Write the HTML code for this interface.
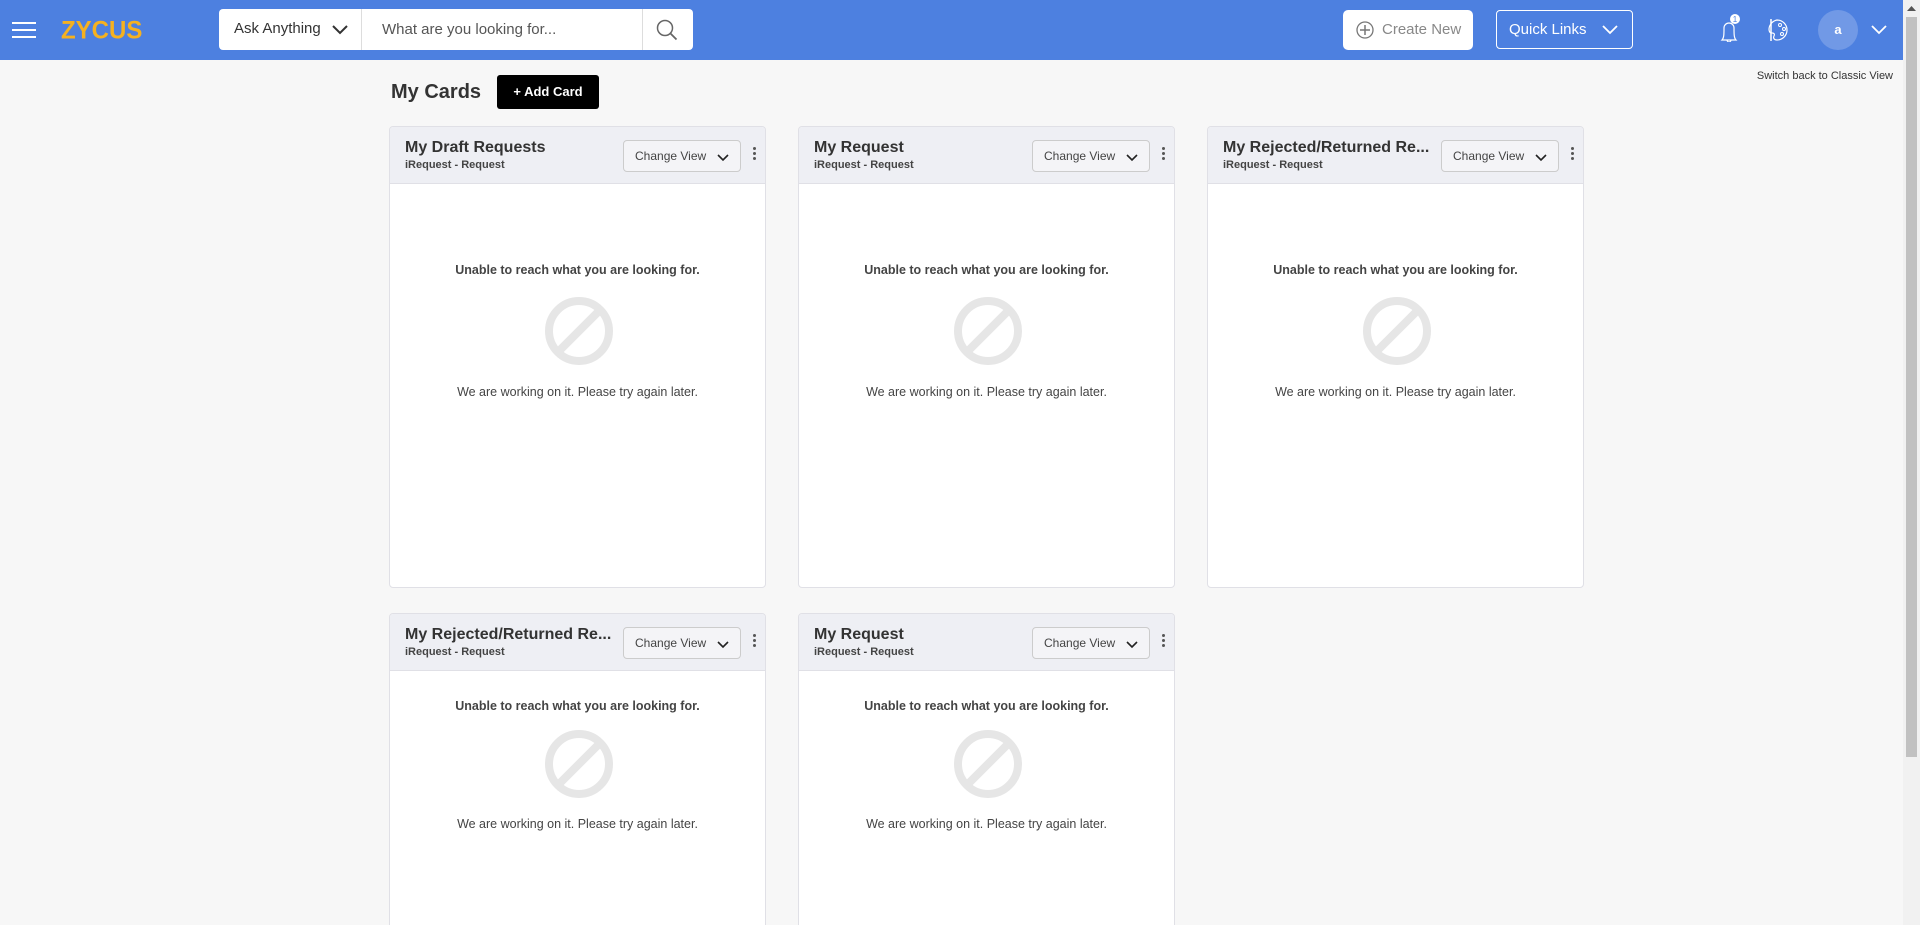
<!DOCTYPE html>
<html><head><meta charset="utf-8"><style>
*{box-sizing:border-box;margin:0;padding:0}
html{width:1920px;height:925px;overflow:hidden}
body{width:1920px;height:925px;overflow:hidden;background:#f7f7f7;font-family:"Liberation Sans",Arial,sans-serif;position:relative;color:#333}
.hdr{position:absolute;left:0;top:0;width:1903px;height:60px;background:#4d80e0}
.abs{position:absolute}
.sb{position:absolute;left:1903px;top:0;width:17px;height:925px;background:#f1f1f1}
.sb .th{position:absolute;left:3px;top:17px;width:11px;height:740px;background:#c1c1c1}
.card{position:absolute;width:377px;background:#fff;border:1px solid #e0e0e6;border-radius:4px;overflow:hidden}
.ch{height:57px;background:#eeeff4;border-bottom:1px solid #e0e0e6;position:relative}
.ct{position:absolute;left:15px;top:12px;font-size:16px;font-weight:bold;color:#333}
.cs{position:absolute;left:15px;top:32px;font-size:11px;font-weight:bold;color:#444}
.cv{position:absolute;left:233px;top:13px;width:118px;height:32px;border:1px solid #ccc;border-radius:4px;background:#f4f4f7;font-size:12px;color:#444;padding:8px 0 0 11px}
.cv svg{position:absolute;right:11px;top:13px}
.km{position:absolute;left:363px;top:20px;width:3px}
.km i{display:block;width:3px;height:3px;background:#555;border-radius:50%;margin-bottom:2px}
.u{position:absolute;left:0;width:100%;text-align:center;font-size:12.5px;font-weight:bold;color:#444;top:136px}
.w{position:absolute;left:0;width:100%;text-align:center;font-size:12.5px;color:#444;top:258px}
.ic{position:absolute;left:154px;top:169px}
</style></head><body>
<div class="hdr">
<div class="abs" style="left:12px;top:22px;width:24px"><div style="height:2px;background:#fff;margin-bottom:5px"></div><div style="height:2px;background:#fff;margin-bottom:5px"></div><div style="height:2px;background:#fff"></div></div>
<div class="abs" style="left:61px;top:17px;font-size:24px;font-weight:900;color:#f5b120;letter-spacing:0px;transform:scaleY(1.05)">ZYCUS</div>
<div class="abs" style="left:219px;top:9px;width:474px;height:41px;background:#fff;border-radius:4px">
<div class="abs" style="left:15px;top:11px;font-size:15px;color:#333">Ask Anything</div>
<svg class="abs" style="left:113px;top:16px" width="16" height="10"><path d="M1 1l7 7 7-7" stroke="#333" stroke-width="2" fill="none"/></svg>
<div class="abs" style="left:142px;top:0;width:1px;height:41px;background:#ddd"></div>
<div class="abs" style="left:163px;top:12px;font-size:15px;color:#555">What are you looking for...</div>
<div class="abs" style="left:423px;top:0;width:1px;height:41px;background:#ddd"></div>
<svg class="abs" style="left:436px;top:9px" width="24" height="24"><circle cx="10" cy="10" r="7.5" stroke="#666" stroke-width="1.5" fill="none"/><path d="M15.5 15.5l6 6" stroke="#666" stroke-width="1.8"/></svg>
</div>
<div class="abs" style="left:1343px;top:10px;width:130px;height:40px;background:#fff;border-radius:5px">
<svg class="abs" style="left:13px;top:11px" width="18" height="18"><circle cx="9" cy="9" r="8" stroke="#777" stroke-width="1.3" fill="none"/><path d="M9 4v10M4 9h10" stroke="#777" stroke-width="1.5"/></svg>
<div class="abs" style="left:39px;top:11px;font-size:15px;color:#888">Create New</div></div>
<div class="abs" style="left:1496px;top:10px;width:137px;height:39px;border:1px solid #fff;border-radius:4px">
<div class="abs" style="left:12px;top:10px;font-size:15px;color:#fff">Quick Links</div>
<svg class="abs" style="left:105px;top:14px" width="16" height="10"><path d="M1 1l7 7 7-7" stroke="#fff" stroke-width="1.8" fill="none"/></svg></div>
<svg class="abs" style="left:1716px;top:14px" width="26" height="28"><path d="M6 26c2-2 2-6 2-12a5 5 0 0 1 10 0c0 6 0 10 2 12z M11 26c0 1 1 2 2 2s2-1 2-2" stroke="#fff" stroke-width="1.2" fill="none"/><circle cx="19" cy="5" r="5" fill="#fff"/><text x="19" y="8" font-size="8" text-anchor="middle" fill="#4d80e0" font-family="Liberation Sans">1</text></svg>
<svg class="abs" style="left:1767px;top:17px" width="24" height="26"><path d="M10 3a10 10 0 1 1 0 20c-3 0-4-2-3-4s0-3-2-3-3-1-3-4a10 10 0 0 1 8-9z" stroke="#fff" stroke-width="1.2" fill="none"/><circle cx="13" cy="8" r="1.5" stroke="#fff" fill="none"/><circle cx="17" cy="12" r="1.5" stroke="#fff" fill="none"/><circle cx="15" cy="17" r="1.5" stroke="#fff" fill="none"/><path d="M4 2v22" stroke="#fff" stroke-width="1.5"/></svg>
<div class="abs" style="left:1818px;top:10px;width:40px;height:40px;border-radius:50%;background:#7199e6;color:#fff;font-size:13px;font-weight:bold;text-align:center;line-height:40px">a</div>
<svg class="abs" style="left:1871px;top:25px" width="16" height="10"><path d="M1 1l7 7 7-7" stroke="#fff" stroke-width="1.8" fill="none"/></svg>
</div>
<div class="sb"><div class="th"></div><svg class="abs" style="left:4px;top:5px" width="9" height="6"><path d="M0 6l4.5-5 4.5 5z" fill="#555"/></svg></div>
<div class="abs" style="right:27px;top:70px;font-size:11px;color:#333">Switch back to Classic View</div>
<div class="abs" style="left:391px;top:81px;font-size:20px;font-weight:bold;color:#333">My Cards</div>
<div class="abs" style="left:497px;top:75px;width:102px;height:34px;background:#000;border-radius:3px;color:#fff;font-size:13px;font-weight:bold;text-align:center;line-height:34px">+ Add Card</div>

<div class="card" style="left:389px;top:126px;height:462px"><div class="ch"><div class="ct">My Draft Requests</div><div class="cs">iRequest - Request</div><div class="cv">Change View<svg width="12" height="8"><path d="M1 1l5 5 5-5" stroke="#222" stroke-width="1.6" fill="none"/></svg></div><div class="km"><i></i><i></i><i></i></div></div>
<div class="u">Unable to reach what you are looking for.</div><svg class="ic" width="70" height="70"><circle cx="35" cy="35" r="30" stroke="#e6e6e6" stroke-width="8" fill="none"/><path d="M14 56L56 14" stroke="#e6e6e6" stroke-width="8"/></svg><div class="w">We are working on it. Please try again later.</div></div>

<div class="card" style="left:798px;top:126px;height:462px"><div class="ch"><div class="ct">My Request</div><div class="cs">iRequest - Request</div><div class="cv">Change View<svg width="12" height="8"><path d="M1 1l5 5 5-5" stroke="#222" stroke-width="1.6" fill="none"/></svg></div><div class="km"><i></i><i></i><i></i></div></div>
<div class="u">Unable to reach what you are looking for.</div><svg class="ic" width="70" height="70"><circle cx="35" cy="35" r="30" stroke="#e6e6e6" stroke-width="8" fill="none"/><path d="M14 56L56 14" stroke="#e6e6e6" stroke-width="8"/></svg><div class="w">We are working on it. Please try again later.</div></div>

<div class="card" style="left:1207px;top:126px;height:462px"><div class="ch"><div class="ct">My Rejected/Returned Re...</div><div class="cs">iRequest - Request</div><div class="cv">Change View<svg width="12" height="8"><path d="M1 1l5 5 5-5" stroke="#222" stroke-width="1.6" fill="none"/></svg></div><div class="km"><i></i><i></i><i></i></div></div>
<div class="u">Unable to reach what you are looking for.</div><svg class="ic" width="70" height="70"><circle cx="35" cy="35" r="30" stroke="#e6e6e6" stroke-width="8" fill="none"/><path d="M14 56L56 14" stroke="#e6e6e6" stroke-width="8"/></svg><div class="w">We are working on it. Please try again later.</div></div>

<div class="card" style="left:389px;top:613px;height:330px"><div class="ch"><div class="ct">My Rejected/Returned Re...</div><div class="cs">iRequest - Request</div><div class="cv">Change View<svg width="12" height="8"><path d="M1 1l5 5 5-5" stroke="#222" stroke-width="1.6" fill="none"/></svg></div><div class="km"><i></i><i></i><i></i></div></div>
<div class="u" style="top:85px">Unable to reach what you are looking for.</div><svg class="ic" style="top:115px" width="70" height="70"><circle cx="35" cy="35" r="30" stroke="#e6e6e6" stroke-width="8" fill="none"/><path d="M14 56L56 14" stroke="#e6e6e6" stroke-width="8"/></svg><div class="w" style="top:203px">We are working on it. Please try again later.</div></div>

<div class="card" style="left:798px;top:613px;height:330px"><div class="ch"><div class="ct">My Request</div><div class="cs">iRequest - Request</div><div class="cv">Change View<svg width="12" height="8"><path d="M1 1l5 5 5-5" stroke="#222" stroke-width="1.6" fill="none"/></svg></div><div class="km"><i></i><i></i><i></i></div></div>
<div class="u" style="top:85px">Unable to reach what you are looking for.</div><svg class="ic" style="top:115px" width="70" height="70"><circle cx="35" cy="35" r="30" stroke="#e6e6e6" stroke-width="8" fill="none"/><path d="M14 56L56 14" stroke="#e6e6e6" stroke-width="8"/></svg><div class="w" style="top:203px">We are working on it. Please try again later.</div></div>
</body></html>
